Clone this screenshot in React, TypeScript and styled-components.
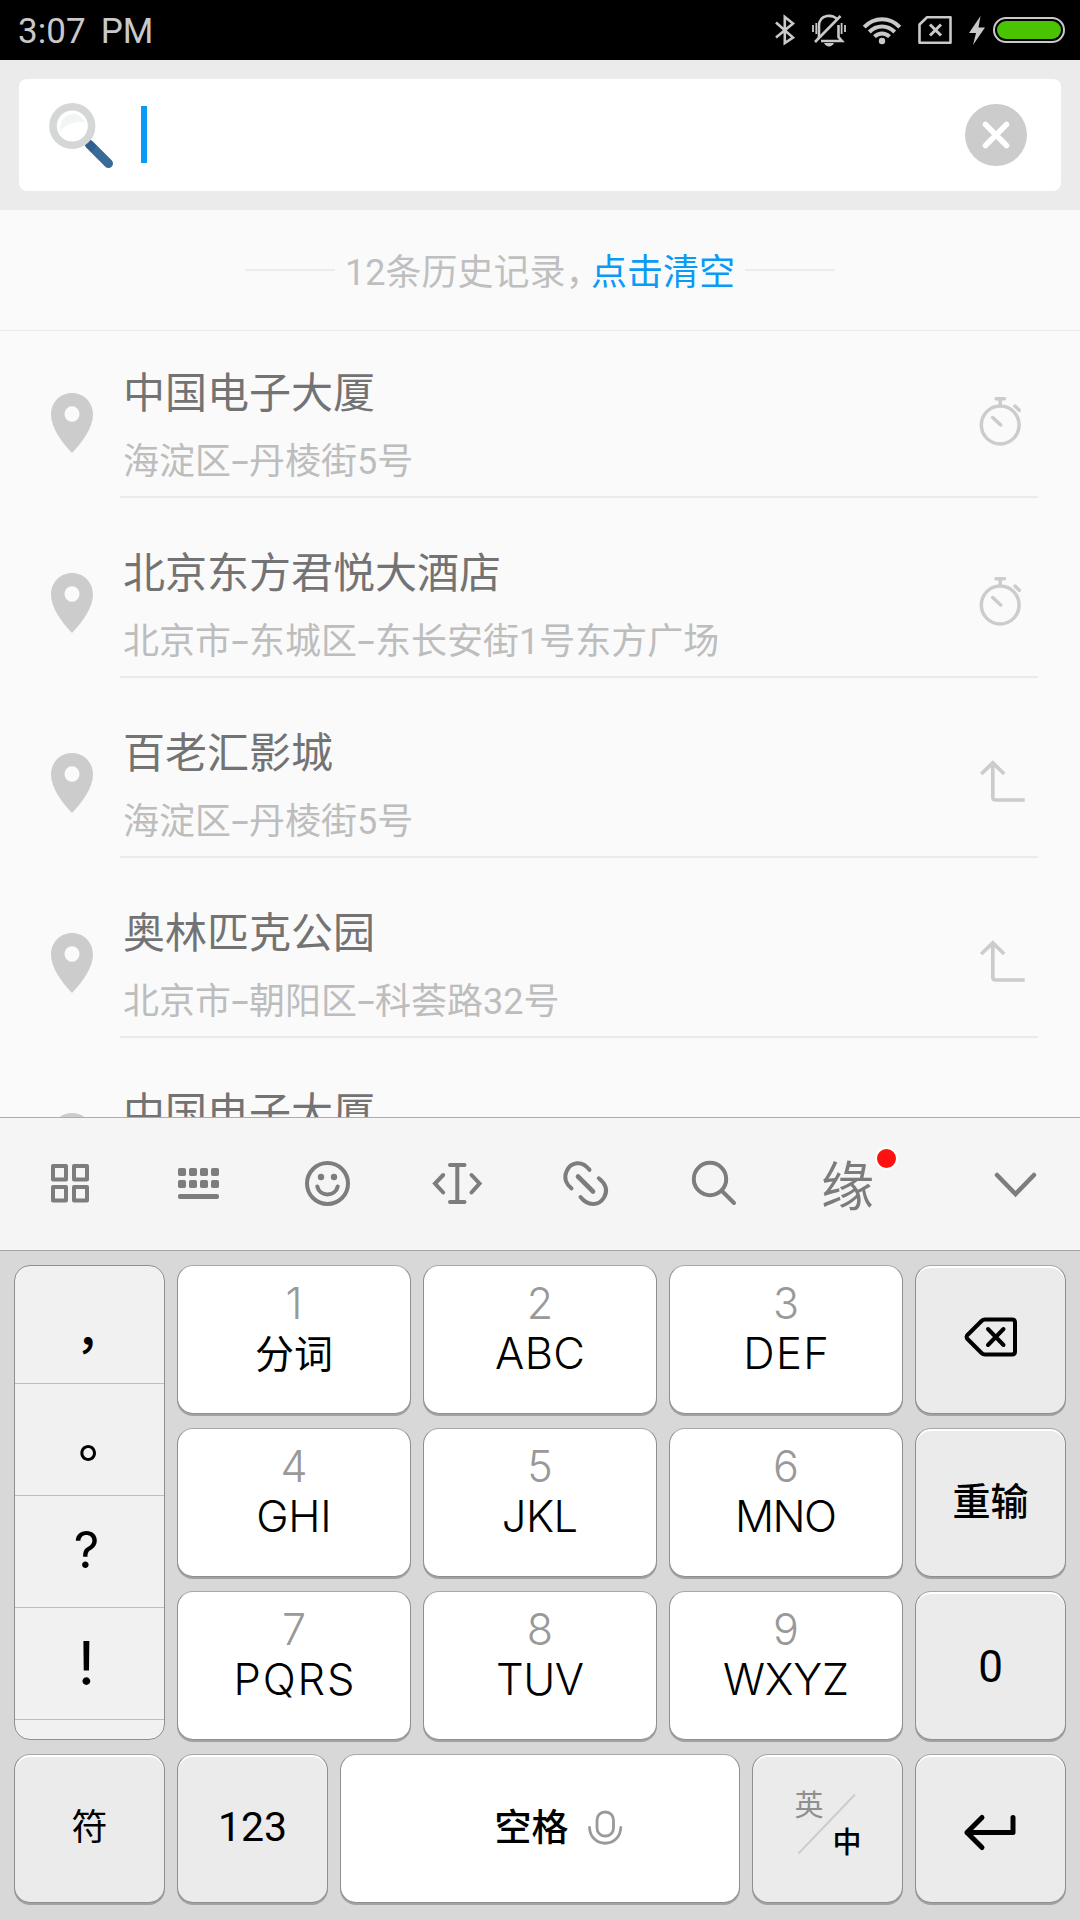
import React from "react";
import styled, { createGlobalStyle } from "styled-components";

const CJK = `"Noto Sans CJK SC", sans-serif`;

const GlobalStyle = createGlobalStyle`
  * { box-sizing: border-box; }
  body { margin: 0; background: #fafafa; }
  svg { display: block; flex: none; overflow: visible; }
`;

const Screen = styled.div`
  width: 1080px;
  height: 1920px;
  overflow: hidden;
  display: flex;
  flex-direction: column;
  background: #fafafa;
  font-family: Roboto, ${CJK};
`;

/* ---------- status bar ---------- */

const StatusBar = styled.header`
  flex: none;
  height: 60px;
  padding: 0 15px 0 18px;
  background: #000;
  color: #c9c9c9;
  display: flex;
  align-items: center;
  justify-content: space-between;
`;

const Clock = styled.span`
  padding-top: 3px;
  font-size: 35px;
  line-height: 60px;
  letter-spacing: 0.1px;
  word-spacing: 6px;
`;

const StatusIcons = styled.div`
  display: flex;
  align-items: center;
  gap: 17px;
`;

const Power = styled.div`
  display: flex;
  align-items: center;
  gap: 8px;
`;

/* ---------- search ---------- */

const SearchBand = styled.div`
  flex: none;
  height: 150px;
  padding: 19px;
  background: #ebebeb;
`;

const SearchBox = styled.div`
  height: 112px;
  padding: 0 34px 0 30px;
  border-radius: 8px;
  background: #fff;
  display: flex;
  align-items: center;
`;

const Caret = styled.span`
  width: 6px;
  height: 57px;
  margin: 0 0 1px 27px;
  background: #0a9bf5;
`;

const ClearButton = styled.button`
  width: 62px;
  height: 62px;
  margin-left: auto;
  padding: 0;
  border: 0;
  border-radius: 50%;
  background: #ccc;
`;

/* ---------- history ---------- */

const HistoryHeader = styled.div`
  flex: none;
  height: 121px;
  border-bottom: 1px solid #ebebeb;
  display: flex;
  align-items: center;
  justify-content: center;
  gap: 10px;
`;

const Rule = styled.span`
  width: 90px;
  height: 2px;
  background: #ececec;
`;

const HistoryText = styled.span`
  padding-top: 1px;
  font-size: 36px;
  line-height: 60px;
  color: #bfbfbf;
  white-space: nowrap;
`;

const Comma = styled.span`
  margin-right: 7.5px;
  font-family: ${CJK};
  font-feature-settings: "halt";
`;

const ClearLink = styled.span`
  color: #0a9bf5;
`;

const List = styled.div`
  flex: 1;
  min-height: 0;
  overflow: hidden;
`;

const Row = styled.div`
  height: 167px;
  margin-bottom: 13px;
  padding-left: 42px;
  display: flex;
`;

const PinSlot = styled.div`
  width: 78px;
  padding-top: 61px;
`;

const RowBody = styled.div`
  width: 918px;
  padding: 28px 6px 0 3px;
  border-bottom: 2px solid #ebebeb;
  display: flex;
  justify-content: space-between;
`;

const RowAction = styled.div`
  padding-top: 33px;
`;

const Title = styled.div`
  height: 68px;
  padding-top: 2px;
  font-size: 42px;
  line-height: 66px;
  color: #737373;
`;

const Address = styled.div`
  padding-top: 1px;
  font-size: 36px;
  line-height: 66px;
  color: #bdbdbd;
  white-space: nowrap;
`;

const Dash = styled.span`
  display: inline-block;
  width: 18px;
  text-align: center;
  font-family: Inter, sans-serif;
  transform: scaleX(1.3);
`;

/* ---------- input method toolbar ---------- */

const Toolbar = styled.div`
  flex: none;
  height: 134px;
  padding-left: 5px;
  border-top: 1px solid #adadad;
  border-bottom: 1px solid #a6a6a6;
  background: #f5f5f5;
  display: flex;
`;

const Tool = styled.div<{ $last?: boolean }>`
  position: relative;
  width: 129px;
  margin-left: ${(p) => (p.$last ? "auto" : "0")};
  display: flex;
  align-items: center;
  justify-content: center;
`;

const FateLabel = styled.span`
  padding: 7px 0 0 8px;
  font-size: 53px;
  line-height: 78px;
  color: #7c7c7c;
`;

const Badge = styled.span`
  position: absolute;
  left: 96px;
  top: 29px;
  width: 23px;
  height: 23px;
  border: 2px solid #fff;
  border-radius: 50%;
  background: #f11;
`;

/* ---------- keypad ---------- */

const Keypad = styled.div`
  flex: none;
  height: 669px;
  padding: 14px 14px 0;
  background: #d8d8d8;
  display: flex;
  flex-direction: column;
  gap: 14px;
`;

const KeyGrid = styled.div`
  display: grid;
  grid-template-columns: 151px 234px 234px 234px 151px;
  grid-template-rows: repeat(3, 149px);
  gap: 14px 12px;
`;

const BottomRow = styled.div`
  display: grid;
  grid-template-columns: 151px 151px 400px 151px 151px;
  grid-template-rows: 149px;
  gap: 12px;
`;

const Key = styled.button<{ $tone?: "light" | "grey"; $lift?: number }>`
  padding: 0 0 ${(p) => p.$lift ?? 0}px;
  border: 1px solid #8f8f8f;
  border-top-color: #a8a8a8;
  border-radius: 16px;
  background: ${(p) => (p.$tone === "grey" ? "#ebebeb" : "#fff")};
  box-shadow: 0 2px 0 #a2a2a2${(p) => (p.$tone === "grey" ? ", inset 0 2px 0 #fff" : "")};
  color: #000;
  font-family: Roboto, ${CJK};
  display: flex;
  align-items: center;
  justify-content: center;
`;

const LetterKey = styled(Key)`
  flex-direction: column;
  justify-content: flex-start;
  padding-top: 11px;
`;

const Digit = styled.span`
  height: 50px;
  font: 300 43px/50px Inter, sans-serif;
  padding-top: 1px;
  color: #999;
`;

const Letters = styled.span<{ $tracking: number }>`
  font: 300 43.5px/52px Inter, ${CJK};
  letter-spacing: ${(p) => p.$tracking}px;
  margin-right: ${(p) => -p.$tracking}px;
`;

const Hanzi = styled.span`
  font: 400 39px/48px ${CJK};
`;

const KeyLabel = styled.span<{ $size: number; $weight?: number; $shift?: number }>`
  font-size: ${(p) => p.$size}px;
  font-weight: ${(p) => p.$weight ?? 400};
  line-height: 50px;
  margin-top: ${(p) => p.$shift ?? 0}px;
`;

const Punctuation = styled.div`
  grid-row: span 3;
  overflow: hidden;
  border: 1px solid #8f8f8f;
  border-radius: 16px;
  background: #f1f1f1;
`;

const Mark = styled.div<{ $tall?: boolean; $latin?: boolean; $size: number; $top: number; $left?: number }>`
  height: ${(p) => (p.$tall ? 118 : 112)}px;
  border-bottom: 1px solid #bdbdbd;
  padding-top: ${(p) => p.$top}px;
  padding-left: ${(p) => p.$left ?? 0}px;
  padding-right: ${(p) => (p.$latin ? 6 : 0)}px;
  font: ${(p) => (p.$latin ? 400 : 500)} ${(p) => p.$size}px/50px ${(p) => (p.$latin ? "Inter," : "")} ${CJK};
  text-align: center;
  color: #000;
`;

const SpaceKey = styled(Key)`
  gap: 19px;
  padding-left: 36px;
`;

const Languages = styled.div`
  position: relative;
  width: 66px;
  height: 66px;
  margin: -11px 2px 0 0;
`;

const LangName = styled.span<{ $active?: boolean }>`
  position: absolute;
  ${(p) => (p.$active ? "right: -2px; bottom: -4px;" : "left: 1px; top: -7px;")}
  font: ${(p) => (p.$active ? 500 : 400)} 29px/40px ${CJK};
  color: ${(p) => (p.$active ? "#000" : "#8f8f8f")};
`;

/* ---------- drawings ---------- */

const grey = "#c9c9c9";

const BluetoothIcon = () => (
  <svg width="20" height="30" viewBox="775 15 20 30" fill="none" stroke={grey} strokeWidth="2.6">
    <path d="M776 22.5 793 37.5 784.8 43V17L793 23.5 776 37.5" strokeLinejoin="miter" />
  </svg>
);

const MutedBellIcon = () => (
  <svg width="34" height="31" viewBox="812 14 34 31" fill="none" stroke={grey} strokeWidth="2.6">
    <path d="M819 37V25C819 13 834 12.5 837.5 19M838.5 24V36L842 40H821" />
    <path d="M840.5 15 815 41" />
    <path d="M813 24v7M816.3 22v11M841.6 22v11M845 24v7" strokeWidth="1.8" />
    <path d="M824 42h10c-2 4.5-8 4.5-10 0z" fill={grey} stroke="none" />
  </svg>
);

const WifiIcon = () => (
  <svg width="38" height="27" viewBox="863 16 38 27" fill="none" stroke={grey} strokeWidth="4">
    <path d="M864.2 26.2C874 15.6 890 15.6 899.8 26.2" />
    <path d="M869.3 31C876.5 23.5 887.5 23.5 894.7 31" />
    <path d="M874.5 35.6C879 31.3 885 31.3 889.5 35.6" />
    <circle cx="882" cy="40" r="3.2" fill={grey} stroke="none" />
  </svg>
);

const NoSimIcon = () => (
  <svg width="34" height="28" viewBox="918 15 34 28" fill="none" stroke={grey} strokeWidth="2.6">
    <path d="M927 16.3H950.5V41.7H919.5V23.5Z" strokeLinejoin="round" />
    <path d="M930 23.5 941 34.5M941 23.5 930 34.5" strokeWidth="3" />
  </svg>
);

const BoltIcon = () => (
  <svg width="16" height="29" viewBox="969 15 16 29" fill={grey}>
    <path d="M980.5 15 969 32h7l-3 12 12-17.500h-6.500z" />
  </svg>
);

const BatteryIcon = () => (
  <svg width="72" height="26" viewBox="0 0 72 26">
    <rect x="1" y="1" width="70" height="24" rx="12" fill="none" stroke={grey} strokeWidth="2" />
    <rect x="4" y="4" width="64" height="18" rx="9" fill="#4ac402" />
  </svg>
);

const MagnifierIcon = () => (
  <svg width="65" height="65" viewBox="49 103 65 65">
    <path d="M89.500 144.500 108.500 163.500" stroke="#3a6a98" strokeWidth="9" strokeLinecap="round" />
    <path d="M87.500 142.500 94 149" stroke="#2f5f8e" strokeWidth="7.500" />
    <circle cx="72.300" cy="126" r="19.300" fill="#fff" stroke="#d5d7d7" strokeWidth="7.600" />
    <path d="M60 131.500C58 113 79 107 85 122.500 75 120.500 66 124 60 131.500Z" fill="#f3f4f4" />
  </svg>
);

const PinIcon = () => (
  <svg width="60" height="62" viewBox="42 392 60 62">
    <path
      fillRule="evenodd"
      fill="#ccc"
      d="M72 393C60 393 51 402.500 51 414.500 51 427 61 441.500 72 453 83 441.500 93 427 93 414.500 93 402.500 84 393 72 393ZM72 406.200A7.500 7.800 0 1 1 72 421.800 7.500 7.800 0 1 1 72 406.200Z"
    />
  </svg>
);

const StopwatchIcon = () => (
  <svg width="60" height="60" viewBox="972 392 60 60" fill="none" stroke="#ccc" strokeWidth="3.500" strokeLinecap="round">
    <circle cx="1000.200" cy="425" r="18.900" />
    <path d="M996 398.800h8.500M1000.200 399v6M1015 406l4.300 4.300M992.700 417.500l8 7.500" />
  </svg>
);

const FillArrowIcon = () => (
  <svg width="60" height="60" viewBox="972 752 60 60" fill="none" stroke="#ccc" strokeWidth="3.700">
    <path d="M981.200 774 992.800 762.800 1004.300 774M992.800 763V797Q992.800 800 995.800 800H1024.700" />
  </svg>
);

const toolStroke = { fill: "none", stroke: "#7d7d7d", strokeWidth: 4, strokeLinecap: "round" as const };

const GridIcon = () => (
  <svg width="61" height="60" viewBox="39 1154 61 60" {...toolStroke} strokeLinejoin="round">
    <path d="M53 1166h13v13.500h-13zM74 1166h13v13.500h-13zM53 1187h13v13.500h-13zM74 1187h13v13.500h-13z" />
  </svg>
);

const KeyboardIcon = () => (
  <svg width="61" height="60" viewBox="168 1154 61 60" fill="#7d7d7d">
    {[1168, 1180].map((y) =>
      [178, 189, 200, 211].map((x) => <rect key={`${x}-${y}`} x={x} y={y} width="8" height="8" rx="1.800" />)
    )}
    <rect x="178" y="1194" width="41" height="5" rx="2" />
  </svg>
);

const SmileIcon = () => (
  <svg width="61" height="60" viewBox="297 1154 61 60" {...toolStroke}>
    <circle cx="327.500" cy="1183.500" r="20.500" />
    <path d="M317.300 1186.500C319.500 1197 335.500 1197 337.700 1186.500" />
    <circle cx="321" cy="1177" r="3.200" fill="#7d7d7d" stroke="none" />
    <circle cx="334" cy="1177" r="3.200" fill="#7d7d7d" stroke="none" />
  </svg>
);

const CursorIcon = () => (
  <svg width="61" height="60" viewBox="426 1154 61 60" {...toolStroke}>
    <path d="M450 1165h14.500M450 1202h14.500M457.300 1165v37" />
    <path d="M443.200 1175 435 1183.500 443.200 1192.500M471.500 1175 479.500 1183.500 471.500 1192.500" />
  </svg>
);

const LinkIcon = () => (
  <svg width="61" height="60" viewBox="555 1154 61 60" {...toolStroke}>
    <path d="M589.500 1169.800C582 1160 570.500 1161.500 566.500 1171.500 563.500 1178.500 566.500 1184.500 571.500 1188.300" />
    <path d="M598.800 1178.300C606 1184 608 1190.500 604 1197.500 598.500 1206.500 587.500 1206 580.500 1197" />
    <path d="M578 1176.500 593 1191.500" strokeWidth="4.600" />
  </svg>
);

const SearchIcon = () => (
  <svg width="61" height="60" viewBox="684 1154 61 60" {...toolStroke}>
    <circle cx="710" cy="1179" r="16.200" />
    <path d="M722 1191 734 1203" />
  </svg>
);

const ChevronIcon = () => (
  <svg width="61" height="60" viewBox="985 1154 61 60" {...toolStroke} strokeWidth="4.500">
    <path d="M997 1175 1015.500 1194 1034 1175" />
  </svg>
);

const BackspaceIcon = () => (
  <svg width="54" height="40" viewBox="964 1317 54 40" fill="none" stroke="#000" strokeWidth="4" strokeLinecap="round" strokeLinejoin="round">
    <path d="M985 1319.500H1012Q1015 1319.500 1015 1322.500V1351.500Q1015 1354.500 1012 1354.500H985Q983 1354.500 981.500 1353L967 1338.500Q966 1337 967 1335.500L981.500 1321Q983 1319.500 985 1319.500Z" />
    <path d="M988 1329 1003.500 1345M1003.500 1329 988 1345" />
  </svg>
);

const EnterIcon = () => (
  <svg width="54" height="36" viewBox="964 1811 54 36" fill="none" stroke="#000" strokeWidth="5" strokeLinecap="round">
    <path d="M1013 1817.500V1832.500H967M982 1817.500 967 1832.500 982 1847.500" strokeLinejoin="round" />
  </svg>
);

const MicIcon = () => (
  <svg width="34" height="36" viewBox="588 1810 34 36" fill="none" stroke="#9a9a9a" strokeWidth="2.800" strokeLinecap="round">
    <rect x="597" y="1811" width="16.500" height="24" rx="8" />
    <path d="M589.500 1826.500C590.500 1847.500 619.800 1847.500 620.800 1826.500" />
  </svg>
);

/* ---------- data ---------- */

type Place = { name: string; address: string[]; action: "recent" | "fill" };

const places: Place[] = [
  { name: "中国电子大厦", address: ["海淀区", "丹棱街5号"], action: "recent" },
  { name: "北京东方君悦大酒店", address: ["北京市", "东城区", "东长安街1号东方广场"], action: "recent" },
  { name: "百老汇影城", address: ["海淀区", "丹棱街5号"], action: "fill" },
  { name: "奥林匹克公园", address: ["北京市", "朝阳区", "科荟路32号"], action: "fill" },
  { name: "中国电子大厦", address: ["海淀区", "丹棱街5号"], action: "fill" },
];

const letterRows = [
  [
    { text: "分词", hanzi: true, tracking: 0 },
    { text: "ABC", tracking: 0.3 },
    { text: "DEF", tracking: 1.4 },
  ],
  [
    { text: "GHI", tracking: -0.2 },
    { text: "JKL", tracking: -0.5 },
    { text: "MNO", tracking: -1.6 },
  ],
  [
    { text: "PQRS", tracking: 1.8 },
    { text: "TUV", tracking: -0.5 },
    { text: "WXYZ", tracking: -0.2 },
  ],
];

const PlaceRow = ({ place }: { place: Place }) => (
  <Row>
    <PinSlot>
      <PinIcon />
    </PinSlot>
    <RowBody>
      <div>
        <Title>{place.name}</Title>
        <Address>
          {place.address.map((part, i) => (
            <React.Fragment key={part}>
              {i > 0 && <Dash>-</Dash>}
              {part}
            </React.Fragment>
          ))}
        </Address>
      </div>
      <RowAction>{place.action === "recent" ? <StopwatchIcon /> : <FillArrowIcon />}</RowAction>
    </RowBody>
  </Row>
);

const sideKeys = [
  { label: <BackspaceIcon />, lift: 5 },
  { label: <KeyLabel $size={38} $weight={500} $shift={-2}>重输</KeyLabel>, lift: 0 },
  { label: <KeyLabel $size={44} $weight={400} $shift={2}>0</KeyLabel>, lift: 0 },
];

export default function App() {
  return (
    <Screen>
      <GlobalStyle />
      <StatusBar>
        <Clock>3:07 PM</Clock>
        <StatusIcons>
          <BluetoothIcon />
          <MutedBellIcon />
          <WifiIcon />
          <NoSimIcon />
          <Power>
            <BoltIcon />
            <BatteryIcon />
          </Power>
        </StatusIcons>
      </StatusBar>

      <SearchBand>
        <SearchBox>
          <MagnifierIcon />
          <Caret />
          <ClearButton aria-label="清除">
            <svg width="62" height="62" viewBox="0 0 62 62" stroke="#fff" strokeWidth="5.500" strokeLinecap="round">
              <path d="M20.500 20.500 41.500 41.500M41.500 20.500 20.500 41.500" />
            </svg>
          </ClearButton>
        </SearchBox>
      </SearchBand>

      <HistoryHeader>
        <Rule />
        <HistoryText>
          12条历史记录<Comma>，</Comma>
          <ClearLink>点击清空</ClearLink>
        </HistoryText>
        <Rule />
      </HistoryHeader>

      <List>
        {places.map((place, i) => (
          <PlaceRow key={i} place={place} />
        ))}
      </List>

      <Toolbar>
        <Tool><GridIcon /></Tool>
        <Tool><KeyboardIcon /></Tool>
        <Tool><SmileIcon /></Tool>
        <Tool><CursorIcon /></Tool>
        <Tool><LinkIcon /></Tool>
        <Tool><SearchIcon /></Tool>
        <Tool>
          <FateLabel>缘</FateLabel>
          <Badge />
        </Tool>
        <Tool $last><ChevronIcon /></Tool>
      </Toolbar>

      <Keypad>
        <KeyGrid>
          <Punctuation>
            <Mark $tall $size={48} $top={36} $left={20}>，</Mark>
            <Mark $size={50} $top={26} $left={28}>。</Mark>
            <Mark $latin $size={50} $top={29}>?</Mark>
            <Mark $latin $size={60} $top={30}>!</Mark>
          </Punctuation>
          {letterRows.map((row, r) => (
            <React.Fragment key={r}>
              {row.map(({ text, hanzi, tracking }, c) => (
                <LetterKey key={c}>
                  <Digit>{r * 3 + c + 1}</Digit>
                  {hanzi ? <Hanzi>{text}</Hanzi> : <Letters $tracking={tracking}>{text}</Letters>}
                </LetterKey>
              ))}
              <Key $tone="grey" $lift={sideKeys[r].lift}>{sideKeys[r].label}</Key>
            </React.Fragment>
          ))}
        </KeyGrid>
        <BottomRow>
          <Key $tone="grey"><KeyLabel $size={36} $shift={-1}>符</KeyLabel></Key>
          <Key $tone="grey"><KeyLabel $size={41} $weight={400} $shift={-3}>123</KeyLabel></Key>
          <SpaceKey>
            <KeyLabel $size={37} $weight={500} $shift={1}>空格</KeyLabel>
            <MicIcon />
          </SpaceKey>
          <Key $tone="grey">
            <Languages>
              <svg width="66" height="66" viewBox="0 0 66 66" stroke="#cdcdcd" strokeWidth="2">
                <path d="M4.500 63.500 61 4.500" />
              </svg>
              <LangName>英</LangName>
              <LangName $active>中</LangName>
            </Languages>
          </Key>
          <Key $tone="grey"><EnterIcon /></Key>
        </BottomRow>
      </Keypad>
    </Screen>
  );
}
